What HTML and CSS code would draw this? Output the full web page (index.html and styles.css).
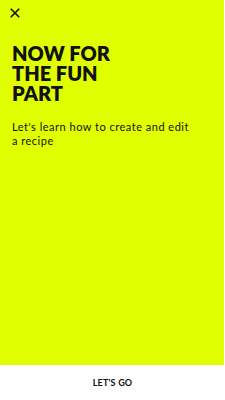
FILE: index.html
```html
<!DOCTYPE html>
<html>
<head>
<meta charset="utf-8">
<link rel="stylesheet" href="styles.css">
</head>
<body>
<div class="screen">
  <main class="hero">
    <button class="close" aria-label="Close">
      <svg width="10" height="10" viewBox="0 0 10 10"><path d="M0.7 0.7 L9.3 9.3 M9.3 0.7 L0.7 9.3" stroke="#111" stroke-width="1.6" fill="none"/></svg>
    </button>
    <h1 class="title">NOW FOR<br>THE FUN<br>PART</h1>
    <p class="lead">Let's learn how to create and edit a recipe</p>
  </main>
  <footer class="footer">
    <span class="cta">LET'S GO</span>
  </footer>
</div>
</body>
</html>
```
FILE: styles.css
```css
* { box-sizing: border-box; }
html, body { margin: 0; padding: 0; background: #fff; }
.screen {
  width: 225px;
  height: 400px;
  display: flex;
  flex-direction: column;
  font-family: Lato, "Liberation Sans", sans-serif;
  color: #111;
}
.hero {
  width: 224px;
  height: 365px;
  background: #e0ff00;
  padding: 8px 12px 0 12px;
  display: flex;
  flex-direction: column;
}
.close {
  width: 10px;
  height: 10px;
  margin-left: -2px;
  padding: 0;
  border: 0;
  background: none;
  display: block;
}
.close svg { display: block; }
.title {
  margin: 25px 0 0 0;
  font-size: 20px;
  line-height: 20px;
  font-weight: 800;
  letter-spacing: 0;
}
.lead {
  margin: 17px 0 0 0;
  font-size: 11px;
  line-height: 14px;
  font-weight: 400;
  letter-spacing: 0.5px;
  padding-right: 14px;
}
.footer {
  flex: 1;
  display: flex;
  align-items: center;
  justify-content: center;
}
.cta {
  font-size: 9px;
  font-weight: 700;
  letter-spacing: 0.2px;
}
```
